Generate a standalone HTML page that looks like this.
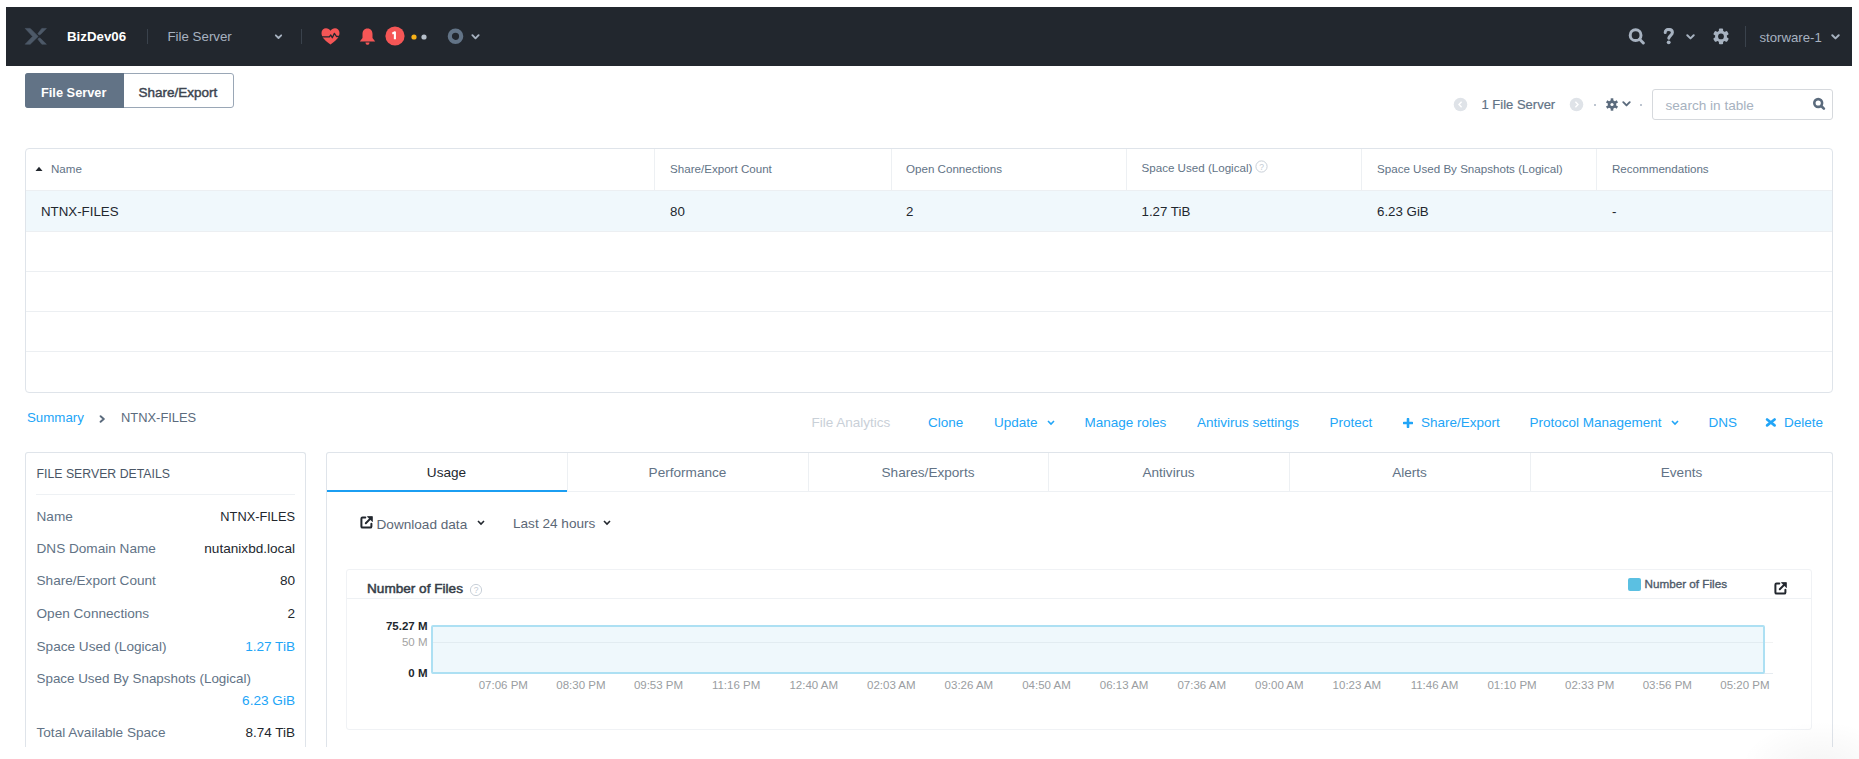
<!DOCTYPE html>
<html><head><meta charset="utf-8"><style>
html,body{margin:0;padding:0;background:#fff;width:1859px;height:759px;overflow:hidden;position:relative}
.t{position:absolute;line-height:20px;white-space:nowrap;font-family:"Liberation Sans", sans-serif}
svg{display:block}
</style></head><body>
<div style="position:absolute;left:6px;top:7px;width:1846px;height:59px;background:#22272e"></div>
<svg style="position:absolute;left:22px;top:25px" width="30" height="23" viewBox="0 0 30 23"><g fill="#4d5968" stroke="#4d5968" stroke-width="0.6" stroke-linejoin="round"><path d="M3.2 3.4 L8.2 3.4 L16.2 11.4 L8.2 19.2 L3.2 19.2 L10.6 11.4 Z"/><path d="M19.8 3.4 L24.4 3.4 L18.4 9.5 Q17.2 10.4 16.3 9.3 L15.9 8.6 Z"/><path d="M19.8 19.2 L24.4 19.2 L18.4 13.3 Q17.2 12.4 16.3 13.5 L15.9 14.2 Z"/></g></svg>
<div class="t" style="left:67px;top:26.700000000000003px;font-size:13.3px;font-weight:700;color:#ffffff;">BizDev06</div>
<div style="position:absolute;left:147px;top:29px;width:1px;height:15px;background:#3a424c"></div>
<div class="t" style="left:167.5px;top:26.700000000000003px;font-size:13.3px;font-weight:400;color:#a7b2c0;">File Server</div>
<svg style="position:absolute;left:274px;top:33.5px" width="9" height="6" viewBox="0 0 9 6"><path d="M1.8 1.3 L4.5 4 L7.2 1.3" stroke="#a7b2c0" stroke-width="1.8" fill="none" stroke-linecap="round" stroke-linejoin="round"/></svg>
<div style="position:absolute;left:301px;top:29px;width:1px;height:15px;background:#3a424c"></div>
<svg style="position:absolute;left:321px;top:28px" width="19" height="17" viewBox="0 0 19 17"><path d="M9.5 16.5 C5 13 0.5 10 0.5 5 C0.5 2 2.7 0.3 5 0.3 C7 0.3 8.5 1.4 9.5 2.8 C10.5 1.4 12 0.3 14 0.3 C16.3 0.3 18.5 2 18.5 5 C18.5 10 14 13 9.5 16.5 Z" fill="#f55656"/><path d="M0 8.8 L8.4 8.8 L9.8 7 L11.3 9.7 L13.4 5.4 L15.5 8.5 L19 8.3" stroke="#22272e" stroke-width="1.3" fill="none" stroke-linejoin="round"/></svg>
<svg style="position:absolute;left:359px;top:28px" width="17" height="17" viewBox="0 0 17 17"><path d="M8.5 0.5 C5 0.5 3.5 3 3.5 6 L3.5 10 L0.8 13.5 L16.2 13.5 L13.5 10 L13.5 6 C13.5 3 12 0.5 8.5 0.5 Z" fill="#f55656"/><path d="M6.5 14.5 L10.5 14.5 C10.5 16 9.5 16.8 8.5 16.8 C7.5 16.8 6.5 16 6.5 14.5 Z" fill="#f55656"/></svg>
<svg style="position:absolute;left:384.5px;top:26.4px" width="20" height="20" viewBox="0 0 20 20"><circle cx="10" cy="10" r="9.6" fill="#f55656"/><path d="M7.3 7.6 L9.9 6.3 L9.9 13.2" stroke="#fff" stroke-width="2.1" fill="none" stroke-linejoin="round"/></svg>
<svg style="position:absolute;left:411px;top:34px" width="6" height="6" viewBox="0 0 6 6"><circle cx="3" cy="3" r="2.6" fill="#f8b218"/></svg>
<svg style="position:absolute;left:421px;top:34px" width="6" height="6" viewBox="0 0 6 6"><circle cx="3" cy="3" r="2.6" fill="#b7c0cb"/></svg>
<svg style="position:absolute;left:447px;top:28px" width="17" height="17" viewBox="0 0 17 17"><circle cx="8.5" cy="8.3" r="5.7" stroke="#627386" stroke-width="4.2" fill="none"/></svg>
<svg style="position:absolute;left:471px;top:34px" width="9" height="6" viewBox="0 0 9 6"><path d="M1.4 1.2 L4.5 4.3 L7.6 1.2" stroke="#a7b2c0" stroke-width="1.9" fill="none" stroke-linecap="round" stroke-linejoin="round"/></svg>
<svg style="position:absolute;left:1628px;top:28px" width="18" height="17" viewBox="0 0 18 17"><circle cx="7.6" cy="7.2" r="5.4" stroke="#a7b2c0" stroke-width="3" fill="none"/><path d="M11.6 11.3 L15.3 15" stroke="#a7b2c0" stroke-width="3" stroke-linecap="round"/></svg>
<svg style="position:absolute;left:1663px;top:28px" width="12" height="17" viewBox="0 0 12 17"><path d="M2.2 4.6 C2.2 2.4 3.8 1.4 5.9 1.4 C8.1 1.4 9.4 2.8 9.4 4.5 C9.4 7 6.4 7.5 5.8 10.2" stroke="#a7b2c0" stroke-width="3" fill="none" stroke-linecap="round"/><circle cx="5.7" cy="14.3" r="1.9" fill="#a7b2c0"/></svg>
<svg style="position:absolute;left:1686px;top:34px" width="9" height="6" viewBox="0 0 9 6"><path d="M1.3 1.2 L4.5 4.4 L7.7 1.2" stroke="#a7b2c0" stroke-width="2" fill="none" stroke-linecap="round" stroke-linejoin="round"/></svg>
<svg style="position:absolute;left:1712px;top:28px" width="18" height="17" viewBox="0 0 18 17"><circle cx="9" cy="8.4" r="5.9" fill="#a7b2c0"/><g fill="#a7b2c0" transform="translate(9 8.4)"><rect x="-2.1" y="-7.9" width="4.2" height="15.8" rx="1"/><rect x="-2.1" y="-7.9" width="4.2" height="15.8" rx="1" transform="rotate(60)"/><rect x="-2.1" y="-7.9" width="4.2" height="15.8" rx="1" transform="rotate(120)"/></g><circle cx="9" cy="8.4" r="2.9" fill="#22272e"/></svg>
<div style="position:absolute;left:1745px;top:26px;width:1px;height:21px;background:#3a424c"></div>
<div class="t" style="left:1759.5px;top:27.9px;font-size:13.2px;font-weight:400;color:#a7b2c0;">storware-1</div>
<svg style="position:absolute;left:1831px;top:34px" width="9" height="6" viewBox="0 0 9 6"><path d="M1.3 1.2 L4.5 4.4 L7.7 1.2" stroke="#a7b2c0" stroke-width="2" fill="none" stroke-linecap="round" stroke-linejoin="round"/></svg>
<div style="position:absolute;left:25px;top:73px;width:209px;height:35px;box-sizing:border-box;border:1px solid #9aa7b6;border-radius:3px;background:#fff;overflow:hidden"></div>
<div style="position:absolute;left:25px;top:73px;width:99px;height:35px;background:#627386;border-radius:3px 0 0 3px"></div>
<div class="t" style="left:41px;top:82.5px;font-size:12.8px;font-weight:700;color:#ffffff;">File Server</div>
<div class="t" style="left:138.5px;top:82.7px;font-size:13.5px;font-weight:400;color:#3d4550;-webkit-text-stroke:0.45px #3d4550;">Share/Export</div>
<svg style="position:absolute;left:1453px;top:97px" width="15" height="15" viewBox="0 0 15 15"><circle cx="7.5" cy="7.5" r="6.8" fill="#dfe3e8"/><path d="M8.6 4.8 L6 7.5 L8.6 10.2" stroke="#fff" stroke-width="1.4" fill="none"/></svg>
<div class="t" style="left:1481.5px;top:94.5px;font-size:13px;font-weight:400;color:#627386;-webkit-text-stroke:0.2px #627386;">1 File Server</div>
<svg style="position:absolute;left:1569px;top:97px" width="15" height="15" viewBox="0 0 15 15"><circle cx="7.5" cy="7.5" r="6.8" fill="#dfe3e8"/><path d="M6.4 4.8 L9 7.5 L6.4 10.2" stroke="#fff" stroke-width="1.4" fill="none"/></svg>
<div style="position:absolute;left:1594px;top:104px;width:2px;height:2px;background:#a7b2c0;border-radius:1px"></div>
<svg style="position:absolute;left:1605px;top:98px" width="14" height="13" viewBox="0 0 14 13"><circle cx="7" cy="6.5" r="4.2" fill="#5b6b7d"/><g fill="#5b6b7d" transform="translate(7 6.5)"><rect x="-1.3" y="-6.2" width="2.6" height="12.4"/><rect x="-1.3" y="-6.2" width="2.6" height="12.4" transform="rotate(60)"/><rect x="-1.3" y="-6.2" width="2.6" height="12.4" transform="rotate(120)"/></g><circle cx="7" cy="6.5" r="1.6" fill="#fff"/></svg>
<svg style="position:absolute;left:1622px;top:101px" width="9" height="6" viewBox="0 0 9 6"><path d="M1.3 1.2 L4.5 4.4 L7.7 1.2" stroke="#5b6b7d" stroke-width="1.9" fill="none" stroke-linecap="round" stroke-linejoin="round"/></svg>
<div style="position:absolute;left:1640px;top:104px;width:2px;height:2px;background:#a7b2c0;border-radius:1px"></div>
<div style="position:absolute;left:1652px;top:89px;width:181px;height:31px;box-sizing:border-box;border:1px solid #d6d9dd;border-radius:3px;background:#fff"></div>
<div class="t" style="left:1665.5px;top:95.5px;font-size:13.6px;font-weight:400;color:#a7b2c0;">search in table</div>
<svg style="position:absolute;left:1812px;top:97px" width="14" height="14" viewBox="0 0 14 14"><circle cx="6.2" cy="6" r="3.9" stroke="#5b6b7d" stroke-width="2.6" fill="none"/><path d="M9.2 9 L11.9 11.7" stroke="#5b6b7d" stroke-width="2.6" stroke-linecap="round"/></svg>
<div style="position:absolute;left:25px;top:148px;width:1808px;height:245px;box-sizing:border-box;border:1px solid #dfe4ea;border-radius:4px;background:#fff"></div>
<div style="position:absolute;left:26px;top:190px;width:1806px;height:41px;background:#f0f8fc"></div>
<div style="position:absolute;left:26px;top:190px;width:1806px;height:1px;background:#eceff2"></div>
<div style="position:absolute;left:26px;top:230.6px;width:1806px;height:1px;background:#eceff2"></div>
<div style="position:absolute;left:26px;top:271px;width:1806px;height:1px;background:#eceff2"></div>
<div style="position:absolute;left:26px;top:311px;width:1806px;height:1px;background:#eceff2"></div>
<div style="position:absolute;left:26px;top:351px;width:1806px;height:1px;background:#eceff2"></div>
<div style="position:absolute;left:654px;top:149px;width:1px;height:41px;background:#edf0f3"></div>
<div style="position:absolute;left:891px;top:149px;width:1px;height:41px;background:#edf0f3"></div>
<div style="position:absolute;left:1126px;top:149px;width:1px;height:41px;background:#edf0f3"></div>
<div style="position:absolute;left:1361px;top:149px;width:1px;height:41px;background:#edf0f3"></div>
<div style="position:absolute;left:1596px;top:149px;width:1px;height:41px;background:#edf0f3"></div>
<svg style="position:absolute;left:35px;top:166px" width="8" height="6" viewBox="0 0 8 6"><path d="M0.5 5 L4 0.8 L7.5 5 Z" fill="#22272e"/></svg>
<div class="t" style="left:51px;top:159.4px;font-size:11.6px;font-weight:400;color:#627386;">Name</div>
<div class="t" style="left:670px;top:159.4px;font-size:11.6px;font-weight:400;color:#627386;">Share/Export Count</div>
<div class="t" style="left:906px;top:159.4px;font-size:11.6px;font-weight:400;color:#627386;">Open Connections</div>
<div class="t" style="left:1141.5px;top:158.4px;font-size:11.6px;font-weight:400;color:#627386;">Space Used (Logical)</div>
<svg style="position:absolute;left:1255px;top:160px" width="13" height="13" viewBox="0 0 13 13"><circle cx="6.5" cy="6.5" r="5.6" stroke="#c3cbd4" stroke-width="0.9" fill="none"/><text x="6.5" y="9.6" font-size="8.5" text-anchor="middle" fill="#c3cbd4" font-family="Liberation Sans">?</text></svg>
<div class="t" style="left:1377px;top:159.4px;font-size:11.6px;font-weight:400;color:#627386;">Space Used By Snapshots (Logical)</div>
<div class="t" style="left:1612px;top:159.4px;font-size:11.6px;font-weight:400;color:#627386;">Recommendations</div>
<div class="t" style="left:41px;top:201.7px;font-size:13.3px;font-weight:400;color:#22272e;">NTNX-FILES</div>
<div class="t" style="left:670px;top:201.7px;font-size:13.3px;font-weight:400;color:#22272e;">80</div>
<div class="t" style="left:906px;top:201.7px;font-size:13.3px;font-weight:400;color:#22272e;">2</div>
<div class="t" style="left:1141.5px;top:201.7px;font-size:13.3px;font-weight:400;color:#22272e;">1.27 TiB</div>
<div class="t" style="left:1377px;top:201.7px;font-size:13.3px;font-weight:400;color:#22272e;">6.23 GiB</div>
<div class="t" style="left:1612px;top:201.7px;font-size:13.3px;font-weight:400;color:#22272e;">-</div>
<div class="t" style="left:27px;top:407.8px;font-size:13.3px;font-weight:400;color:#22a5f7;">Summary</div>
<svg style="position:absolute;left:99px;top:415px" width="7" height="8" viewBox="0 0 7 8"><path d="M1.6 1.2 L4.8 4 L1.6 6.8" stroke="#5b6b7d" stroke-width="1.9" fill="none" stroke-linecap="round" stroke-linejoin="round"/></svg>
<div class="t" style="left:121px;top:407.8px;font-size:12.9px;font-weight:400;color:#5b6b7d;">NTNX-FILES</div>
<div class="t" style="left:811.5px;top:412.7px;font-size:13.5px;font-weight:400;color:#c9d0d8;">File Analytics</div>
<div class="t" style="left:928px;top:412.7px;font-size:13.5px;font-weight:400;color:#22a5f7;">Clone</div>
<div class="t" style="left:994px;top:412.7px;font-size:13.5px;font-weight:400;color:#22a5f7;">Update</div>
<svg style="position:absolute;left:1047px;top:420px" width="8" height="6" viewBox="0 0 8 6"><path d="M1 1 L4 4 L7 1" stroke="#22a5f7" stroke-width="1.6" fill="none"/></svg>
<div class="t" style="left:1084.5px;top:412.7px;font-size:13.5px;font-weight:400;color:#22a5f7;">Manage roles</div>
<div class="t" style="left:1197px;top:412.7px;font-size:13.5px;font-weight:400;color:#22a5f7;">Antivirus settings</div>
<div class="t" style="left:1329.5px;top:412.7px;font-size:13.5px;font-weight:400;color:#22a5f7;">Protect</div>
<svg style="position:absolute;left:1403px;top:418px" width="10" height="10" viewBox="0 0 10 10"><path d="M5 1 V9 M1 5 H9" stroke="#22a5f7" stroke-width="2.6" stroke-linecap="round"/></svg>
<div class="t" style="left:1421px;top:412.7px;font-size:13.5px;font-weight:400;color:#22a5f7;">Share/Export</div>
<div class="t" style="left:1529.5px;top:412.7px;font-size:13.5px;font-weight:400;color:#22a5f7;">Protocol Management</div>
<svg style="position:absolute;left:1671px;top:420px" width="8" height="6" viewBox="0 0 8 6"><path d="M1 1 L4 4 L7 1" stroke="#22a5f7" stroke-width="1.6" fill="none"/></svg>
<div class="t" style="left:1708.5px;top:412.7px;font-size:13.5px;font-weight:400;color:#22a5f7;">DNS</div>
<svg style="position:absolute;left:1765px;top:417px" width="12" height="11" viewBox="0 0 12 11"><path d="M2.1 2.5 L9.6 8.4 M9.6 2.5 L2.1 8.4" stroke="#22a5f7" stroke-width="2.7" stroke-linecap="round"/></svg>
<div class="t" style="left:1784px;top:412.7px;font-size:13.5px;font-weight:400;color:#22a5f7;">Delete</div>
<div style="position:absolute;left:25px;top:452px;width:281px;height:295px;box-sizing:border-box;border:1px solid #dfe4ea;border-bottom:none;border-radius:3px 3px 0 0;background:#fff"></div>
<div class="t" style="left:36.5px;top:463.6px;font-size:12.3px;font-weight:400;color:#4a5666;">FILE SERVER DETAILS</div>
<div style="position:absolute;left:36px;top:494px;width:259px;height:1px;background:#eef1f4"></div>
<div class="t" style="left:36.5px;top:507px;font-size:13.6px;font-weight:400;color:#627386;">Name</div>
<div class="t" style="right:1564px;top:507px;font-size:12.8px;font-weight:400;color:#22272e;">NTNX-FILES</div>
<div class="t" style="left:36.5px;top:539.2px;font-size:13.6px;font-weight:400;color:#627386;">DNS Domain Name</div>
<div class="t" style="right:1564px;top:539.2px;font-size:13.6px;font-weight:400;color:#22272e;">nutanixbd.local</div>
<div class="t" style="left:36.5px;top:571.3px;font-size:13.6px;font-weight:400;color:#627386;">Share/Export Count</div>
<div class="t" style="right:1564px;top:571.3px;font-size:13.6px;font-weight:400;color:#22272e;">80</div>
<div class="t" style="left:36.5px;top:604px;font-size:13.6px;font-weight:400;color:#627386;">Open Connections</div>
<div class="t" style="right:1564px;top:604px;font-size:13.6px;font-weight:400;color:#22272e;">2</div>
<div class="t" style="left:36.5px;top:636.7px;font-size:13.6px;font-weight:400;color:#627386;">Space Used (Logical)</div>
<div class="t" style="right:1564px;top:636.7px;font-size:13.6px;font-weight:400;color:#22a5f7;">1.27 TiB</div>
<div class="t" style="left:36.5px;top:669.2px;font-size:13.4px;font-weight:400;color:#627386;">Space Used By Snapshots (Logical)</div>
<div class="t" style="right:1564px;top:691px;font-size:13.6px;font-weight:400;color:#22a5f7;">6.23 GiB</div>
<div class="t" style="left:36.5px;top:723px;font-size:13.6px;font-weight:400;color:#627386;">Total Available Space</div>
<div class="t" style="right:1564px;top:723px;font-size:13.5px;font-weight:400;color:#22272e;">8.74 TiB</div>
<div style="position:absolute;left:326px;top:452px;width:1507px;height:295px;box-sizing:border-box;border:1px solid #dfe4ea;border-bottom:none;border-radius:3px 3px 0 0;background:#fff"></div>
<div style="position:absolute;left:327px;top:491px;width:1505px;height:1px;background:#eef1f4"></div>
<div class="t" style="left:326px;width:241px;text-align:center;top:463px;font-size:13.6px;color:#22272e">Usage</div>
<div style="position:absolute;left:567px;top:453px;width:1px;height:38px;background:#edf0f3"></div>
<div class="t" style="left:567px;width:241px;text-align:center;top:463px;font-size:13.6px;color:#627386">Performance</div>
<div style="position:absolute;left:808px;top:453px;width:1px;height:38px;background:#edf0f3"></div>
<div class="t" style="left:808px;width:240px;text-align:center;top:463px;font-size:13.6px;color:#627386">Shares/Exports</div>
<div style="position:absolute;left:1048px;top:453px;width:1px;height:38px;background:#edf0f3"></div>
<div class="t" style="left:1048px;width:241px;text-align:center;top:463px;font-size:13.6px;color:#627386">Antivirus</div>
<div style="position:absolute;left:1289px;top:453px;width:1px;height:38px;background:#edf0f3"></div>
<div class="t" style="left:1289px;width:241px;text-align:center;top:463px;font-size:13.6px;color:#627386">Alerts</div>
<div style="position:absolute;left:1530px;top:453px;width:1px;height:38px;background:#edf0f3"></div>
<div class="t" style="left:1530px;width:303px;text-align:center;top:463px;font-size:13.6px;color:#627386">Events</div>
<div style="position:absolute;left:327px;top:490px;width:240px;height:2px;background:#1b9ef2"></div>
<svg style="position:absolute;left:360px;top:516px" width="14" height="13" viewBox="0 0 14 13"><path d="M5.3 1.6 H2.6 Q1.4 1.6 1.4 2.8 V10.4 Q1.4 11.6 2.6 11.6 H10.2 Q11.4 11.6 11.4 10.4 V7.8" stroke="#22272e" stroke-width="2" fill="none" stroke-linecap="round"/><path d="M5.8 7.2 L10.6 2.4" stroke="#22272e" stroke-width="2" stroke-linecap="round"/><path d="M7.4 0.6 L12.4 0.6 L12.4 5.6 Z" fill="#22272e" stroke="#22272e" stroke-width="0.8" stroke-linejoin="round"/></svg>
<div class="t" style="left:376.5px;top:514.7px;font-size:13.6px;font-weight:400;color:#5b6776;">Download data</div>
<svg style="position:absolute;left:477px;top:520px" width="8" height="6" viewBox="0 0 8 6"><path d="M1 1 L4 4 L7 1" stroke="#22272e" stroke-width="1.6" fill="none"/></svg>
<div class="t" style="left:513px;top:514px;font-size:13.6px;font-weight:400;color:#5b6776;">Last 24 hours</div>
<svg style="position:absolute;left:603px;top:520px" width="8" height="6" viewBox="0 0 8 6"><path d="M1 1 L4 4 L7 1" stroke="#22272e" stroke-width="1.6" fill="none"/></svg>
<div style="position:absolute;left:346px;top:569px;width:1466px;height:161px;box-sizing:border-box;border:1px solid #f0f2f5;border-radius:3px;background:#fff"></div>
<div style="position:absolute;left:347px;top:598px;width:1464px;height:1px;background:#eef1f4"></div>
<div class="t" style="left:367px;top:578.5px;font-size:13.6px;font-weight:400;color:#353d47;-webkit-text-stroke:0.5px #353d47;">Number of Files</div>
<svg style="position:absolute;left:469px;top:582.5px" width="14" height="14" viewBox="0 0 14 14"><circle cx="7" cy="7" r="5.6" stroke="#c3cbd4" stroke-width="0.9" fill="none"/><text x="7" y="10.1" font-size="8.5" text-anchor="middle" fill="#c3cbd4" font-family="Liberation Sans">?</text></svg>
<div style="position:absolute;left:1628px;top:578px;width:13px;height:13px;background:#5bc0e2;border-radius:2px"></div>
<div class="t" style="left:1644.5px;top:573.8px;font-size:11.7px;font-weight:400;color:#4f5b6a;-webkit-text-stroke:0.35px #4f5b6a;">Number of Files</div>
<svg style="position:absolute;left:1774px;top:582px" width="14" height="13" viewBox="0 0 14 13"><path d="M5.3 1.6 H2.6 Q1.4 1.6 1.4 2.8 V10.4 Q1.4 11.6 2.6 11.6 H10.2 Q11.4 11.6 11.4 10.4 V7.8" stroke="#22272e" stroke-width="2" fill="none" stroke-linecap="round"/><path d="M5.8 7.2 L10.6 2.4" stroke="#22272e" stroke-width="2" stroke-linecap="round"/><path d="M7.4 0.6 L12.4 0.6 L12.4 5.6 Z" fill="#22272e" stroke="#22272e" stroke-width="0.8" stroke-linejoin="round"/></svg>
<div style="position:absolute;left:432px;top:642px;width:1341px;height:1px;background:#f1f2f3"></div>
<div style="position:absolute;left:432px;top:673px;width:1341px;height:1px;background:#e6ebf0"></div>
<div style="position:absolute;left:431px;top:625px;width:1334px;height:49px;box-sizing:border-box;border:2px solid #ade0f3;border-radius:2px;background:rgba(120,195,230,0.12)"></div>
<div class="t" style="right:1431.5px;top:616px;font-size:11.5px;font-weight:700;color:#22272e;">75.27 M</div>
<div class="t" style="right:1431.5px;top:632px;font-size:11.5px;font-weight:400;color:#a3a3a3;">50 M</div>
<div class="t" style="right:1431.5px;top:663px;font-size:11.5px;font-weight:700;color:#22272e;">0 M</div>
<div class="t" style="left:463.3px;width:80px;text-align:center;top:675.2px;font-size:11.5px;color:#9a9da1">07:06 PM</div>
<div class="t" style="left:540.9px;width:80px;text-align:center;top:675.2px;font-size:11.5px;color:#9a9da1">08:30 PM</div>
<div class="t" style="left:618.5px;width:80px;text-align:center;top:675.2px;font-size:11.5px;color:#9a9da1">09:53 PM</div>
<div class="t" style="left:696.1px;width:80px;text-align:center;top:675.2px;font-size:11.5px;color:#9a9da1">11:16 PM</div>
<div class="t" style="left:773.7px;width:80px;text-align:center;top:675.2px;font-size:11.5px;color:#9a9da1">12:40 AM</div>
<div class="t" style="left:851.3px;width:80px;text-align:center;top:675.2px;font-size:11.5px;color:#9a9da1">02:03 AM</div>
<div class="t" style="left:928.9px;width:80px;text-align:center;top:675.2px;font-size:11.5px;color:#9a9da1">03:26 AM</div>
<div class="t" style="left:1006.5px;width:80px;text-align:center;top:675.2px;font-size:11.5px;color:#9a9da1">04:50 AM</div>
<div class="t" style="left:1084.1px;width:80px;text-align:center;top:675.2px;font-size:11.5px;color:#9a9da1">06:13 AM</div>
<div class="t" style="left:1161.7px;width:80px;text-align:center;top:675.2px;font-size:11.5px;color:#9a9da1">07:36 AM</div>
<div class="t" style="left:1239.3px;width:80px;text-align:center;top:675.2px;font-size:11.5px;color:#9a9da1">09:00 AM</div>
<div class="t" style="left:1316.9px;width:80px;text-align:center;top:675.2px;font-size:11.5px;color:#9a9da1">10:23 AM</div>
<div class="t" style="left:1394.5px;width:80px;text-align:center;top:675.2px;font-size:11.5px;color:#9a9da1">11:46 AM</div>
<div class="t" style="left:1472.1px;width:80px;text-align:center;top:675.2px;font-size:11.5px;color:#9a9da1">01:10 PM</div>
<div class="t" style="left:1549.7px;width:80px;text-align:center;top:675.2px;font-size:11.5px;color:#9a9da1">02:33 PM</div>
<div class="t" style="left:1627.3px;width:80px;text-align:center;top:675.2px;font-size:11.5px;color:#9a9da1">03:56 PM</div>
<div class="t" style="left:1704.9px;width:80px;text-align:center;top:675.2px;font-size:11.5px;color:#9a9da1">05:20 PM</div>
<div style="position:absolute;left:1740px;top:709px;width:160px;height:60px;background:radial-gradient(ellipse 50% 80% at 50% 100%, rgba(0,0,0,0.045), rgba(0,0,0,0))"></div>
</body></html>
